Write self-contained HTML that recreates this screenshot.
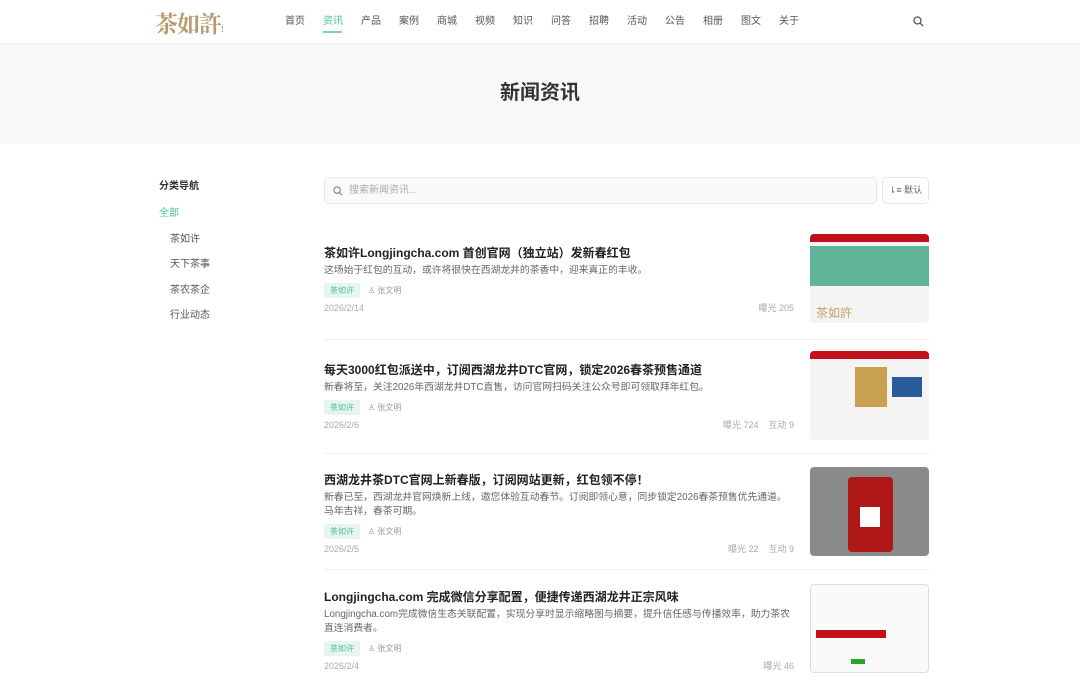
<!DOCTYPE html><html><head><meta charset="utf-8"><style>
*{margin:0;padding:0;box-sizing:border-box}
body{width:1080px;height:674px;overflow:hidden;background:#fff;font-family:"Liberation Sans","Noto Sans CJK SC",sans-serif;color:#333}
.hd{height:44px;border-bottom:1px solid #eee;position:relative;background:#fff}
.logo{position:absolute;left:155px;top:6px;font-family:"Noto Serif CJK SC",serif;font-size:23px;color:#b99a6a;font-weight:bold;letter-spacing:-1px}
.nav{position:absolute;left:285px;top:2px;display:flex;gap:0}
.nav a{font-size:10px;color:#555;text-decoration:none;width:38px;line-height:40px;position:relative}
.nav a.on{color:#4fbf9b}
.nav a.on:after{content:"";position:absolute;left:0;width:19px;bottom:9px;height:2px;background:#7cd1b5}
.banner{height:100px;background:#f8f8f8;text-align:center;font-size:20px;font-weight:bold;line-height:98px;color:#333}
.side{position:absolute;left:159px;top:177px;font-size:10px}
.side div{height:25.5px}
.side .t{font-weight:bold;color:#333;height:27px}
.side .a{color:#4fbf9b}
.side .s{padding-left:11px;color:#555}
.srch{position:absolute;left:324px;top:177px;width:553px;height:27px;border:1px solid #e6e6e6;border-radius:5px;background:#fafafa;font-size:10px;color:#aaa;line-height:25px;padding-left:24px}
.srch svg{position:absolute;left:8px;top:8px}
.sort{position:absolute;left:882px;top:177px;width:47px;height:27px;border:1px solid #e6e6e6;border-radius:5px;font-size:9px;color:#666;line-height:25px;text-align:center}
.it{position:absolute;left:324px;width:605px;border-bottom:1px solid #f0f0f0}
.it h3{font-size:12px;font-weight:bold;color:#222;line-height:16px}
.it p{font-size:9.8px;color:#666;line-height:14px;margin-top:3px;width:472px}
.tg{margin-top:5px;font-size:8px;display:flex;align-items:center;gap:8px;color:#999}
.tg span.b{background:#e6f5ef;color:#4fbf9b;padding:2px 6px;border-radius:2px}
.dt{font-size:9px;color:#aaa;margin-top:4px;width:470px;display:flex;justify-content:space-between;align-items:flex-start;line-height:12px}
.th{position:absolute;right:0;width:119px;height:89px;border-radius:4px;overflow:hidden;background:#f4f4f4}
</style></head><body>
<div class="hd"><div class="logo">茶如許<span style="font-size:8px">!</span></div>
<div class="nav"><a>首页</a><a class="on">资讯</a><a>产品</a><a>案例</a><a>商城</a><a>视频</a><a>知识</a><a>问答</a><a>招聘</a><a>活动</a><a>公告</a><a>相册</a><a>图文</a><a>关于</a></div>
<svg style="position:absolute;left:913px;top:16px" width="11" height="11" viewBox="0 0 11 11"><circle cx="4.5" cy="4.5" r="3.5" fill="none" stroke="#555" stroke-width="1.3"/><path d="M7 7l3 3" stroke="#555" stroke-width="1.3"/></svg></div>
<div class="banner">新闻资讯</div>
<div class="side"><div class="t">分类导航</div><div class="a">全部</div><div class="s">茶如许</div><div class="s">天下茶事</div><div class="s">茶农茶企</div><div class="s">行业动态</div></div>
<div class="srch"><svg width="10" height="10" viewBox="0 0 11 11"><circle cx="4.5" cy="4.5" r="3.5" fill="none" stroke="#888" stroke-width="1.3"/><path d="M7 7l3 3" stroke="#888" stroke-width="1.3"/></svg>搜索新闻资讯...</div>
<div class="sort">⇂≡ 默认</div>

<div class="it" style="top:245px;height:95px"><h3>茶如许Longjingcha.com 首创官网（独立站）发新春红包</h3><p>这场始于红包的互动，或许将很快在西湖龙井的茶香中，迎来真正的丰收。</p><div class="tg"><span class="b">茶如许</span>♙ 张文明</div><div class="dt"><span>2026/2/14</span><span>曝光 205</span></div>
<div class="th" style="top:-11px"><div style="height:8px;background:#c0101a"></div><div style="height:40px;background:#5fb596;margin-top:4px"></div><div style="position:absolute;left:6px;top:70px;font-size:12px;color:#c2a26b;font-family:serif">茶如許</div></div></div>

<div class="it" style="top:362px;height:92px"><h3>每天3000红包派送中，订阅西湖龙井DTC官网，锁定2026春茶预售通道</h3><p>新春将至，关注2026年西湖龙井DTC直售，访问官网扫码关注公众号即可领取拜年红包。</p><div class="tg"><span class="b">茶如许</span>♙ 张文明</div><div class="dt"><span>2026/2/6</span><span>曝光 724 &nbsp;&nbsp; 互动 9</span></div>
<div class="th" style="top:-11px"><div style="height:8px;background:#c0101a"></div><div style="position:absolute;left:45px;top:16px;width:32px;height:40px;background:#c8a050"></div><div style="position:absolute;left:82px;top:26px;width:30px;height:20px;background:#2a5a9a"></div></div></div>

<div class="it" style="top:472px;height:98px"><h3>西湖龙井茶DTC官网上新春版，订阅网站更新，红包领不停！</h3><p>新春已至，西湖龙井官网焕新上线，邀您体验互动春节。订阅即领心意，同步锁定2026春茶预售优先通道。马年吉祥，春茶可期。</p><div class="tg"><span class="b">茶如许</span>♙ 张文明</div><div class="dt"><span>2026/2/5</span><span>曝光 22 &nbsp;&nbsp; 互动 9</span></div>
<div class="th" style="top:-5px;background:#8a8a8a"><div style="position:absolute;left:38px;top:10px;width:45px;height:75px;background:#b01818;border-radius:4px"></div><div style="position:absolute;left:50px;top:40px;width:20px;height:20px;background:#fff"></div></div></div>

<div class="it" style="top:589px;height:90px;border:0"><h3>Longjingcha.com 完成微信分享配置，便捷传递西湖龙井正宗风味</h3><p>Longjingcha.com完成微信生态关联配置，实现分享时显示缩略图与摘要，提升信任感与传播效率，助力茶农直连消费者。</p><div class="tg"><span class="b">茶如许</span>♙ 张文明</div><div class="dt"><span>2026/2/4</span><span>曝光 46</span></div>
<div class="th" style="top:-5px;background:#fafafa;border:1px solid #ddd"><div style="position:absolute;left:5px;top:45px;width:70px;height:8px;background:#c0101a"></div><div style="position:absolute;left:40px;top:74px;width:14px;height:5px;background:#2a2"></div></div></div>
</body></html>
